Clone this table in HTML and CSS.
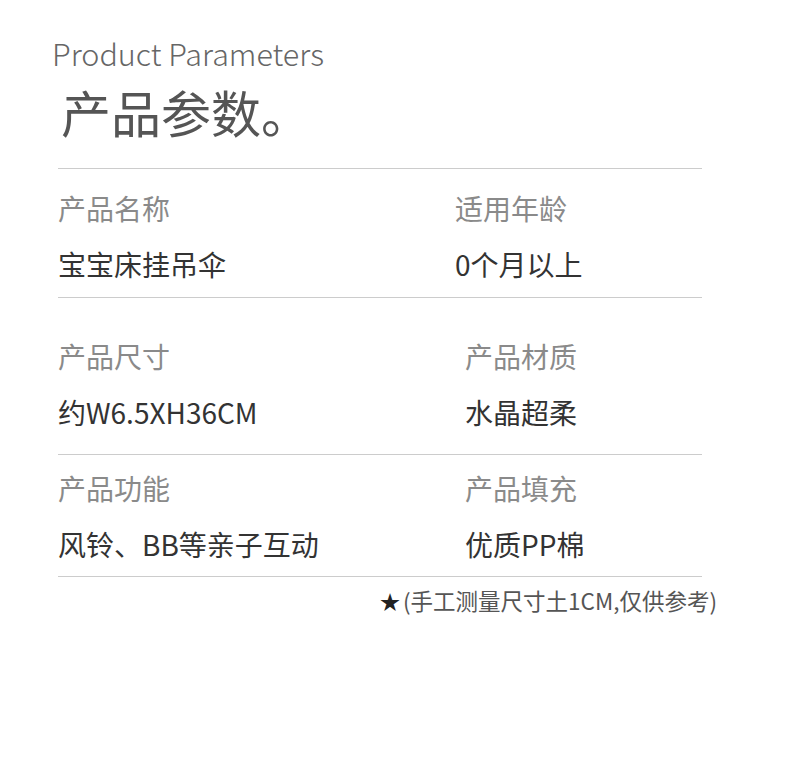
FILE: index.html
```html
<!DOCTYPE html>
<html lang="zh-CN">
<head>
  <meta charset="UTF-8">
  <title>产品参数</title>
  <link rel="stylesheet" href="styles.css">
</head>
<body>
  <div class="page">
    <div class="heading">
      <div class="heading-en">Product Parameters</div>
      <h1>产品参数。</h1>
    </div>

    <div class="params">
      <div class="row row-first">
        <div class="cell">
          <div class="label">产品名称</div>
          <div class="value">宝宝床挂吊伞</div>
        </div>
        <div class="cell">
          <div class="label">适用年龄</div>
          <div class="value">0个月以上</div>
        </div>
      </div>
      <div class="row row-second shifted">
        <div class="cell">
          <div class="label">产品尺寸</div>
          <div class="value">约W6.5XH36CM</div>
        </div>
        <div class="cell">
          <div class="label">产品材质</div>
          <div class="value">水晶超柔</div>
        </div>
      </div>
      <div class="row row-third shifted">
        <div class="cell">
          <div class="label">产品功能</div>
          <div class="value">风铃、BB等亲子互动</div>
        </div>
        <div class="cell">
          <div class="label">产品填充</div>
          <div class="value">优质PP棉</div>
        </div>
      </div>
    </div>

    <div class="note"><span class="star">★</span>(手工测量尺寸土1CM,仅供参考)</div>
  </div>
</body>
</html>
```

FILE: styles.css
```css
* { box-sizing: border-box; }

body {
  margin: 0;
  padding: 0;
  background: #ffffff;
  font-family: "Noto Sans CJK SC", "Noto Sans", sans-serif;
  color: #333333;
}

.page {
  width: 790px;
  height: 779px;
  padding-top: 33px;
}

.heading {
  padding-left: 52px;
}

.heading-en {
  font-size: 30.5px;
  font-weight: 300;
  line-height: 40px;
  color: #666666;
}

h1 {
  margin: 0;
  margin-left: 9px;
  margin-top: 11px;
  font-size: 50px;
  font-weight: 400;
  line-height: 54px;
  color: #555555;
}

.params {
  margin-top: 30px;
  margin-left: 58px;
  width: 644px;
  border-top: 1px solid #cccccc;
}

.row {
  display: grid;
  grid-template-columns: 397px 1fr;
  border-bottom: 1px solid #cccccc;
}

.row.shifted {
  grid-template-columns: 407px 1fr;
}

.row-first { padding: 19px 0 13px; }
.row-second { padding: 38px 0 22px; }
.row-third { padding: 13px 0 12px; }

.cell {
  display: flex;
  flex-direction: column;
  gap: 16px;
}

.label {
  font-size: 28px;
  line-height: 40px;
  color: #8a8a8a;
}

.value {
  font-size: 28px;
  line-height: 40px;
  color: #333333;
}

.note {
  margin-top: 8px;
  padding-left: 380px;
  font-size: 22.5px;
  line-height: 30px;
  color: #555555;
}

.star {
  font-size: 20px;
  color: #222222;
  margin-right: 3px;
}
```
